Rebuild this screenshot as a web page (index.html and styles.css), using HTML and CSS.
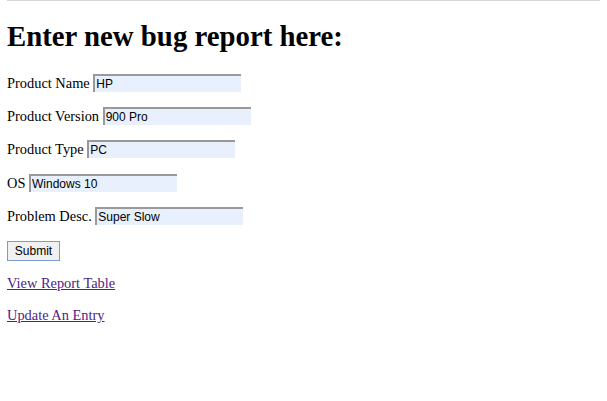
FILE: index.html
```html
<!DOCTYPE html>
<html>
<head>
<meta charset="utf-8">
<title>Bug Report</title>
<link rel="stylesheet" href="styles.css">
</head>
<body>
<div class="topline"></div>
<h1 class="title">Enter new bug report here:</h1>
<form class="form">
  <p class="row">Product Name <input class="field" type="text" value="HP"></p>
  <p class="row">Product Version <input class="field" type="text" value="900 Pro"></p>
  <p class="row">Product Type <input class="field" type="text" value="PC"></p>
  <p class="row">OS <input class="field" type="text" value="Windows 10"></p>
  <p class="row">Problem Desc. <input class="field" type="text" value="Super Slow"></p>
  <button class="submit" type="button">Submit</button>
</form>
<p class="link-row first"><a class="link" href="#">View Report Table</a></p>
<p class="link-row"><a class="link" href="#">Update An Entry</a></p>
</body>
</html>
```
FILE: styles.css
```css
html { background: #fff; }
body {
  margin: 0 7px;
  font-family: "Liberation Serif", "Times New Roman", serif;
  font-size: 14.4px;
  color: #000;
}
.topline {
  height: 1px;
  background: #d6d6d6;
  margin: 0 -7px;
}
.title {
  font-size: 28.8px;
  font-weight: bold;
  margin: 19px 0 21px;
}
.row { margin: 15.2px 0; }
.link-row { margin: 14.4px 0; }
.link-row.first { margin-top: 14.4px; }
.field {
  box-sizing: border-box;
  width: 148px;
  height: 18px;
  padding: 0 1px;
  border-style: solid;
  border-width: 2px 0 0 2px;
  border-color: #999 #e8f0fe #e8f0fe #999;
  background: #e8f0fe;
  font-family: "Liberation Sans", Arial, sans-serif;
  font-size: 12px;
  color: #000;
  vertical-align: baseline;
}
.submit {
  box-sizing: border-box;
  display: inline-block;
  margin-top: 1px;
  font-family: "Liberation Sans", Arial, sans-serif;
  font-size: 12px;
  width: 53px;
  height: 20px;
  padding: 0;
  border: 1px solid #7a9cd3;
  background: #f1f1f1;
  border-radius: 0;
  color: #000;
}
.link { color: #4f2384; }
```
